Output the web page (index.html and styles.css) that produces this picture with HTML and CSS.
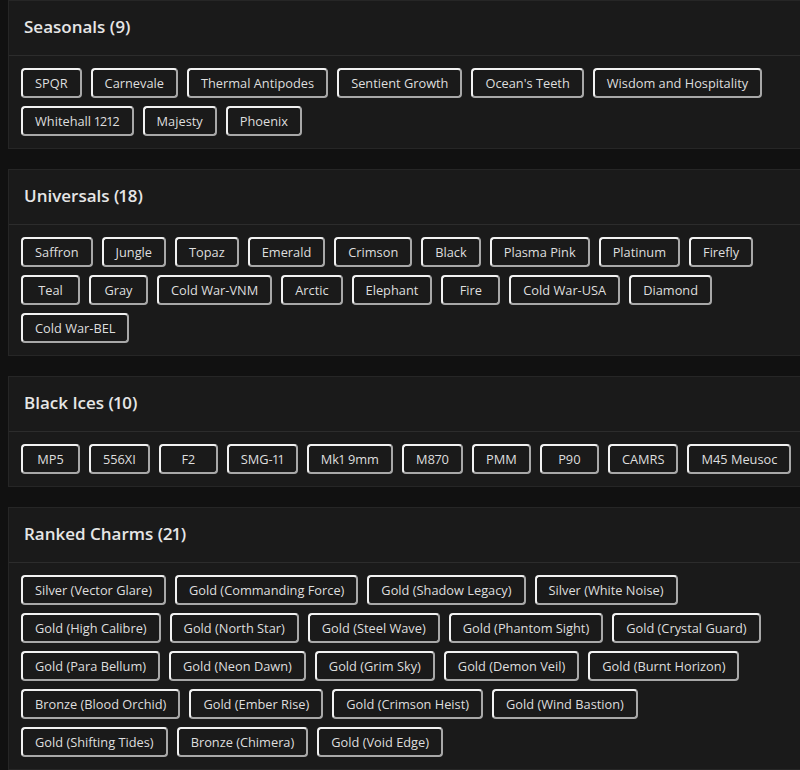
FILE: index.html
```html
<!DOCTYPE html>
<html lang="en">
<head>
    <meta charset="UTF-8">
    <meta name="viewport" content="width=device-width, initial-scale=1.0">
    <title>Charms</title>
    <link rel="stylesheet" href="styles.css">
</head>
<body>

    <div class="sections">
        <div class="card">
            <h2 class="card-title">Seasonals (9)</h2>
            <div class="chips">
                <span class="chip">SPQR</span>
                <span class="chip">Carnevale</span>
                <span class="chip">Thermal Antipodes</span>
                <span class="chip">Sentient Growth</span>
                <span class="chip">Ocean's Teeth</span>
                <span class="chip">Wisdom and Hospitality</span>
                <span class="chip">Whitehall 1212</span>
                <span class="chip">Majesty</span>
                <span class="chip">Phoenix</span>
            </div>
        </div>

        <div class="card">
            <h2 class="card-title">Universals (18)</h2>
            <div class="chips">
                <span class="chip">Saffron</span>
                <span class="chip">Jungle</span>
                <span class="chip">Topaz</span>
                <span class="chip">Emerald</span>
                <span class="chip">Crimson</span>
                <span class="chip">Black</span>
                <span class="chip">Plasma Pink</span>
                <span class="chip">Platinum</span>
                <span class="chip">Firefly</span>
                <span class="chip">Teal</span>
                <span class="chip">Gray</span>
                <span class="chip">Cold War-VNM</span>
                <span class="chip">Arctic</span>
                <span class="chip">Elephant</span>
                <span class="chip">Fire</span>
                <span class="chip">Cold War-USA</span>
                <span class="chip">Diamond</span>
                <span class="chip">Cold War-BEL</span>
            </div>
        </div>

        <div class="card">
            <h2 class="card-title">Black Ices (10)</h2>
            <div class="chips">
                <span class="chip">MP5</span>
                <span class="chip">556XI</span>
                <span class="chip">F2</span>
                <span class="chip">SMG-11</span>
                <span class="chip">Mk1 9mm</span>
                <span class="chip">M870</span>
                <span class="chip">PMM</span>
                <span class="chip">P90</span>
                <span class="chip">CAMRS</span>
                <span class="chip">M45 Meusoc</span>
            </div>
        </div>

        <div class="card">
            <h2 class="card-title">Ranked Charms (21)</h2>
            <div class="chips">
                <span class="chip">Silver (Vector Glare)</span>
                <span class="chip">Gold (Commanding Force)</span>
                <span class="chip">Gold (Shadow Legacy)</span>
                <span class="chip">Silver (White Noise)</span>
                <span class="chip">Gold (High Calibre)</span>
                <span class="chip">Gold (North Star)</span>
                <span class="chip">Gold (Steel Wave)</span>
                <span class="chip">Gold (Phantom Sight)</span>
                <span class="chip">Gold (Crystal Guard)</span>
                <span class="chip">Gold (Para Bellum)</span>
                <span class="chip">Gold (Neon Dawn)</span>
                <span class="chip">Gold (Grim Sky)</span>
                <span class="chip">Gold (Demon Veil)</span>
                <span class="chip">Gold (Burnt Horizon)</span>
                <span class="chip">Bronze (Blood Orchid)</span>
                <span class="chip">Gold (Ember Rise)</span>
                <span class="chip">Gold (Crimson Heist)</span>
                <span class="chip">Gold (Wind Bastion)</span>
                <span class="chip">Gold (Shifting Tides)</span>
                <span class="chip">Bronze (Chimera)</span>
                <span class="chip">Gold (Void Edge)</span>
            </div>
        </div>
    </div>

</body>
</html>
```

FILE: styles.css
```css
body {
    font-family: "Open Sans", "DejaVu Sans", sans-serif;
    font-variant-numeric: proportional-nums;
    color: #e2e2e2;
    background-color: #111111;
    margin: 0;
    padding: 0 0 0 8px;
    overflow: hidden;
}
.sections {
    width: 797px;
    display: flex;
    flex-direction: column;
    gap: 20px;
}
.card {
    background-color: #1a1a1a;
    border: 1px solid #262626;
}
.card-title {
    font-size: 17px;
    font-weight: 600;
    line-height: 22px;
    margin: 0;
    padding: 15px 15px 17px;
    border-bottom: 1px solid #2c2c2c;
    color: #e6e6e6;
}
.chips {
    display: flex;
    flex-wrap: wrap;
    gap: 8px 9px;
    padding: 12px;
}
.chip {
    box-sizing: border-box;
    min-width: 59px;
    font-size: 12.8px;
    line-height: 26px;
    padding: 0 12px;
    text-align: center;
    border: 2px solid;
    border-color: #f2f2f2 #a8a8a8 #a8a8a8 #f2f2f2;
    border-radius: 4px;
    color: #dedede;
    white-space: nowrap;
}
```
